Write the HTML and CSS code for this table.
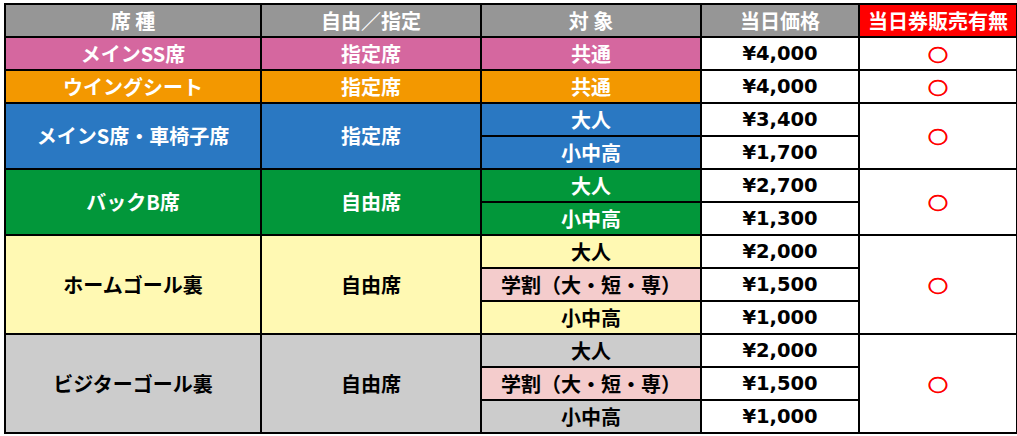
FILE: index.html
```html
<!DOCTYPE html>
<html lang="ja">
<head>
<meta charset="utf-8">
<title>当日価格</title>
<link rel="stylesheet" href="styles.css">
</head>
<body>
<table class="price">
  <colgroup>
    <col class="c1"><col class="c2"><col class="c3"><col class="c4"><col class="c5">
  </colgroup>
  <tr class="head">
    <th>席 種</th><th>自由／指定</th><th>対 象</th><th>当日価格</th><th class="red">当日券販売有無</th>
  </tr>
  <tr class="pink">
    <td>メインSS席</td><td>指定席</td><td>共通</td><td class="yen">¥4,000</td><td class="ok"><span class="maru">○</span></td>
  </tr>
  <tr class="orange">
    <td>ウイングシート</td><td>指定席</td><td>共通</td><td class="yen">¥4,000</td><td class="ok"><span class="maru">○</span></td>
  </tr>
  <tr class="blue">
    <td rowspan="2">メインS席・車椅子席</td><td rowspan="2">指定席</td><td>大人</td><td class="yen">¥3,400</td><td class="ok" rowspan="2"><span class="maru">○</span></td>
  </tr>
  <tr class="blue">
    <td>小中高</td><td class="yen">¥1,700</td>
  </tr>
  <tr class="green">
    <td rowspan="2">バックB席</td><td rowspan="2">自由席</td><td>大人</td><td class="yen">¥2,700</td><td class="ok" rowspan="2"><span class="maru">○</span></td>
  </tr>
  <tr class="green">
    <td>小中高</td><td class="yen">¥1,300</td>
  </tr>
  <tr class="yellow">
    <td rowspan="3">ホームゴール裏</td><td rowspan="3">自由席</td><td>大人</td><td class="yen">¥2,000</td><td class="ok" rowspan="3"><span class="maru">○</span></td>
  </tr>
  <tr class="yellow">
    <td class="student">学割（大・短・専）</td><td class="yen">¥1,500</td>
  </tr>
  <tr class="yellow">
    <td>小中高</td><td class="yen">¥1,000</td>
  </tr>
  <tr class="gray">
    <td rowspan="3">ビジターゴール裏</td><td rowspan="3">自由席</td><td>大人</td><td class="yen">¥2,000</td><td class="ok" rowspan="3"><span class="maru">○</span></td>
  </tr>
  <tr class="gray">
    <td class="student">学割（大・短・専）</td><td class="yen">¥1,500</td>
  </tr>
  <tr class="gray">
    <td>小中高</td><td class="yen">¥1,000</td>
  </tr>
</table>
</body>
</html>
```
FILE: styles.css
```css
html, body {
  margin: 0;
  padding: 0;
  background: #ffffff;
}
body {
  font-family: "Noto Sans CJK JP", "Noto Sans", sans-serif;
}
.price {
  margin: 3px 0 0 4px;
  width: 1012px;
  table-layout: fixed;
  border-collapse: collapse;
}
.c1 { width: 256px; }
.c2 { width: 220px; }
.c3 { width: 220px; }
.c4 { width: 158px; }
.c5 { width: 158px; }
.price tr { height: 33px; }
.price th,
.price td {
  border: 2px solid #000;
  padding: 0;
  text-align: center;
  vertical-align: middle;
  font-size: 20px;
  font-weight: 700;
  line-height: 1;
}
.head th {
  background: #969696;
  color: #fff;
}
.head th.red {
  background: #ff0000;
}
.pink td { background: #d5679f; color: #fff; }
.orange td { background: #f39800; color: #fff; }
.blue td { background: #2a78c2; color: #fff; }
.green td { background: #02973a; color: #fff; }
.yellow td { background: #fff9b3; color: #000; }
.gray td { background: #cccccc; color: #000; }
.price td.student { background: #f4cccc; color: #000; }
.price td.yen {
  background: #fff;
  color: #000;
  font-family: "DejaVu Sans", Verdana, sans-serif;
  font-size: 19.5px;
}
.price td.ok {
  background: #fff;
}
.maru {
  display: inline-block;
  color: #ff0000;
  font-weight: 700;
  font-size: 20px;
  -webkit-text-stroke: 1px #ff0000;
  transform: scale(1, 0.82);
}
```
